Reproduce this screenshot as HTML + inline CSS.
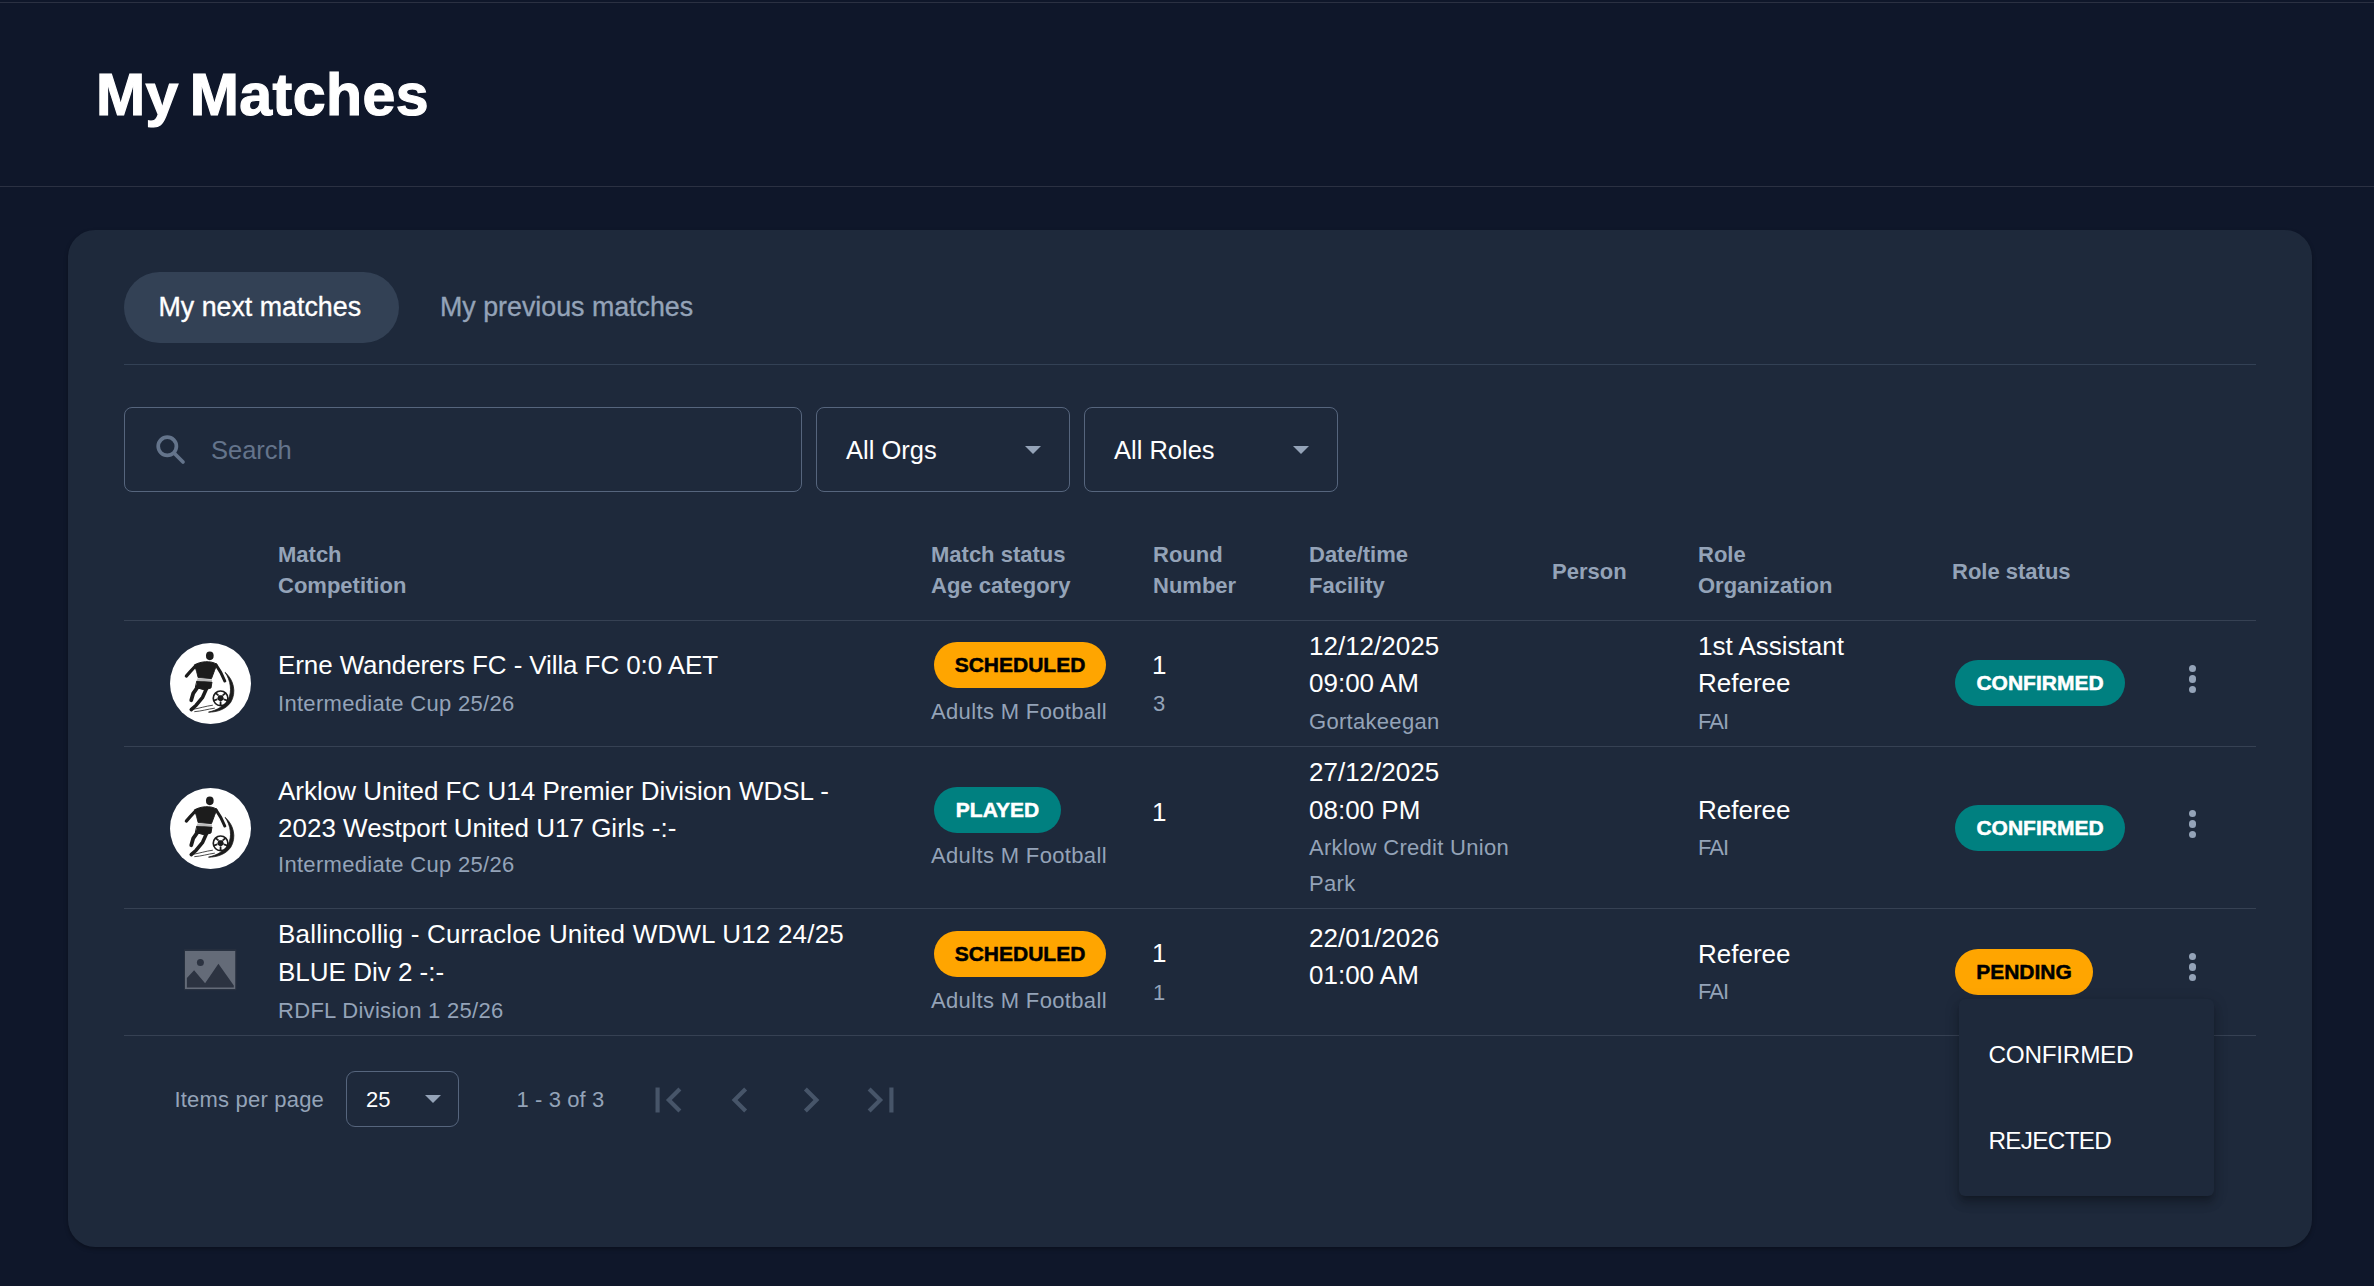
<!DOCTYPE html>
<html><head><meta charset="utf-8"><title>My Matches</title>
<style>
html,body{margin:0;padding:0}
body{width:2374px;height:1286px;overflow:hidden;background:#0f172a;position:relative;font-family:"Liberation Sans",sans-serif}
.t{position:absolute;white-space:nowrap}
.b{position:absolute}
.badge{position:absolute;height:46px;border-radius:23px;font-weight:700;font-size:21px;-webkit-text-stroke:0.5px currentColor;line-height:46px;text-align:center;font-family:"Liberation Sans",sans-serif}
</style></head><body>
<div class="b" style="left:0px;top:2px;width:2374px;height:1px;background:#2b3142"></div>
<div class="b" style="left:0px;top:186px;width:2374px;height:1px;background:#2b3142"></div>
<div class="t" style="left:96px;top:65.54px;font-size:59px;line-height:59px;color:#ffffff;font-weight:700;letter-spacing:0.45px;-webkit-text-stroke:1.2px #fff;word-spacing:-6px;">My Matches</div>
<div class="b" style="left:68px;top:230px;width:2244px;height:1017px;background:#1e293b;border-radius:27px;box-shadow:0 2px 4px rgba(0,0,0,.3)"></div>
<div class="b" style="left:124px;top:272px;width:275px;height:71px;background:#334155;border-radius:36px"></div>
<div class="t" style="left:158.5px;top:294.31px;font-size:26.8px;line-height:26.8px;color:#ffffff;-webkit-text-stroke:0.35px #fff;">My next matches</div>
<div class="t" style="left:440px;top:294.31px;font-size:26.8px;line-height:26.8px;color:#94a3b8;-webkit-text-stroke:0.35px #94a3b8;">My previous matches</div>
<div class="b" style="left:124px;top:364px;width:2132px;height:1px;background:#334155"></div>
<div class="b" style="left:124px;top:407px;width:678px;height:85px;box-sizing:border-box;border:1.5px solid #56657d;border-radius:8px"></div>
<svg class="b" style="left:150px;top:428px" width="44" height="44" viewBox="0 0 44 44"><circle cx="17.3" cy="18.3" r="9.1" fill="none" stroke="#64748b" stroke-width="3.7"/><line x1="24.5" y1="25.5" x2="33" y2="34" stroke="#64748b" stroke-width="3.7" stroke-linecap="round"/></svg>
<div class="t" style="left:211px;top:438.41px;font-size:25.5px;line-height:25.5px;color:#64748b;">Search</div>
<div class="b" style="left:816px;top:407px;width:254px;height:85px;box-sizing:border-box;border:1.5px solid #56657d;border-radius:8px"></div>
<div class="t" style="left:846px;top:437.71px;font-size:25.5px;line-height:25.5px;color:#ffffff;">All Orgs</div>
<svg class="b" style="left:1025px;top:446px" width="16" height="8" viewBox="0 0 16 8"><path d="M0 0H16L8 8Z" fill="#94a3b8"/></svg>
<div class="b" style="left:1084px;top:407px;width:254px;height:85px;box-sizing:border-box;border:1.5px solid #56657d;border-radius:8px"></div>
<div class="t" style="left:1114px;top:437.71px;font-size:25.5px;line-height:25.5px;color:#ffffff;">All Roles</div>
<svg class="b" style="left:1293px;top:446px" width="16" height="8" viewBox="0 0 16 8"><path d="M0 0H16L8 8Z" fill="#94a3b8"/></svg>
<div class="t" style="left:278px;top:543.57px;font-size:22px;line-height:22px;color:#94a3b8;font-weight:700;">Match</div>
<div class="t" style="left:278px;top:575.17px;font-size:22px;line-height:22px;color:#94a3b8;font-weight:700;">Competition</div>
<div class="t" style="left:931px;top:543.57px;font-size:22px;line-height:22px;color:#94a3b8;font-weight:700;">Match status</div>
<div class="t" style="left:931px;top:575.17px;font-size:22px;line-height:22px;color:#94a3b8;font-weight:700;">Age category</div>
<div class="t" style="left:1153px;top:543.57px;font-size:22px;line-height:22px;color:#94a3b8;font-weight:700;">Round</div>
<div class="t" style="left:1153px;top:575.17px;font-size:22px;line-height:22px;color:#94a3b8;font-weight:700;">Number</div>
<div class="t" style="left:1309px;top:543.57px;font-size:22px;line-height:22px;color:#94a3b8;font-weight:700;">Date/time</div>
<div class="t" style="left:1309px;top:575.17px;font-size:22px;line-height:22px;color:#94a3b8;font-weight:700;">Facility</div>
<div class="t" style="left:1552px;top:560.57px;font-size:22px;line-height:22px;color:#94a3b8;font-weight:700;">Person</div>
<div class="t" style="left:1698px;top:543.57px;font-size:22px;line-height:22px;color:#94a3b8;font-weight:700;">Role</div>
<div class="t" style="left:1698px;top:575.17px;font-size:22px;line-height:22px;color:#94a3b8;font-weight:700;">Organization</div>
<div class="t" style="left:1952px;top:560.57px;font-size:22px;line-height:22px;color:#94a3b8;font-weight:700;">Role status</div>
<div class="b" style="left:124px;top:620px;width:2132px;height:1px;background:#364153"></div>
<div class="b" style="left:124px;top:746px;width:2132px;height:1px;background:#364153"></div>
<div class="b" style="left:124px;top:908px;width:2132px;height:1px;background:#364153"></div>
<div class="b" style="left:124px;top:1035px;width:2132px;height:1px;background:#364153"></div>
<svg class="b" style="left:170.0px;top:643.0px" width="81" height="81" viewBox="0 0 82 82"><circle cx="41" cy="41" r="41" fill="#fff"/>
<g fill="#1c1c1c" stroke="#1c1c1c" stroke-linecap="round" stroke-linejoin="round">
<ellipse cx="40.3" cy="13" rx="3.9" ry="4.4" stroke="none"/>
<path d="M25 22 C31 18.5 41 17.5 47.5 21.5 L45 28 L42 36 L28.5 35 L27 29 Z" stroke-width="1"/>
<path d="M26 23 L20.5 29 L16.5 33.5" fill="none" stroke-width="3.2"/>
<path d="M46.5 22 L51.5 30 L55.5 38.5" fill="none" stroke-width="3"/>
<path d="M27.5 38.5 L42.5 39.5 L41.5 45.5 L35 47.5 L26 45 Z" stroke-width="1"/>
<path d="M28.5 44 L23.5 51 L21.5 58" fill="none" stroke-width="3.8"/>
<path d="M37 46 L33 55 L26.5 63 L21.5 67.5" fill="none" stroke-width="3.6"/>
<path d="M56 30 C64.5 37 67.5 50 61.5 60 C56.5 67 48 70 39 70 C47.5 68 55 64 59 57 C63 49 61.5 38 56 30 Z" stroke-width="0.8"/>
<path d="M24 67 C30 66 36 64 43 63" fill="none" stroke-width="0.8"/>
<path d="M25 69.5 C32 69 38 67 45 66" fill="none" stroke-width="0.8"/>
</g>
<path d="M27.5 36 L42.5 37 L42.5 39 L27.5 38.5 Z" fill="#bbb"/>
<circle cx="51.2" cy="56" r="7.4" fill="#fff" stroke="#1c1c1c" stroke-width="1.7"/>
<path d="M49 53 L53.4 53 L54.7 57 L51.2 59.6 L47.7 57 Z" fill="#1c1c1c"/>
<path d="M46 50.5 L49 53 M56.4 50.5 L53.4 53 M54.7 57 L58.4 58.5 M47.7 57 L44 58.5 M51.2 59.6 L51.2 63" stroke="#1c1c1c" stroke-width="1.8" fill="none"/>
</svg>
<div class="t" style="left:278px;top:651.99px;font-size:26px;line-height:26px;color:#ffffff;letter-spacing:-0.1px;">Erne Wanderers FC - Villa FC 0:0 AET</div>
<div class="t" style="left:278px;top:692.67px;font-size:22px;line-height:22px;color:#94a3b8;letter-spacing:0.3px;">Intermediate Cup 25/26</div>
<div class="badge" style="left:934px;top:642px;width:172px;background:#ffa500;color:#000">SCHEDULED</div>
<div class="t" style="left:931px;top:701.17px;font-size:22px;line-height:22px;color:#94a3b8;letter-spacing:0.35px;">Adults M Football</div>
<div class="t" style="left:1152px;top:652.09px;font-size:26px;line-height:26px;color:#ffffff;">1</div>
<div class="t" style="left:1153px;top:693.07px;font-size:22px;line-height:22px;color:#94a3b8;">3</div>
<div class="t" style="left:1309px;top:632.99px;font-size:26px;line-height:26px;color:#ffffff;">12/12/2025</div>
<div class="t" style="left:1309px;top:669.69px;font-size:26px;line-height:26px;color:#ffffff;">09:00 AM</div>
<div class="t" style="left:1309px;top:710.87px;font-size:22px;line-height:22px;color:#94a3b8;letter-spacing:0.3px;">Gortakeegan</div>
<div class="t" style="left:1698px;top:632.99px;font-size:26px;line-height:26px;color:#ffffff;">1st Assistant</div>
<div class="t" style="left:1698px;top:669.69px;font-size:26px;line-height:26px;color:#ffffff;">Referee</div>
<div class="t" style="left:1698px;top:710.87px;font-size:22px;line-height:22px;color:#94a3b8;letter-spacing:-0.9px;">FAI</div>
<div class="badge" style="left:1955px;top:660px;width:170px;background:#008080;color:#fff">CONFIRMED</div>
<div class="b" style="left:2188.5px;top:664.7px;width:7.6px;height:7.6px;background:#94a3b8;border-radius:50%"></div>
<div class="b" style="left:2188.5px;top:675.2px;width:7.6px;height:7.6px;background:#94a3b8;border-radius:50%"></div>
<div class="b" style="left:2188.5px;top:685.7px;width:7.6px;height:7.6px;background:#94a3b8;border-radius:50%"></div>
<svg class="b" style="left:170.0px;top:787.5px" width="81" height="81" viewBox="0 0 82 82"><circle cx="41" cy="41" r="41" fill="#fff"/>
<g fill="#1c1c1c" stroke="#1c1c1c" stroke-linecap="round" stroke-linejoin="round">
<ellipse cx="40.3" cy="13" rx="3.9" ry="4.4" stroke="none"/>
<path d="M25 22 C31 18.5 41 17.5 47.5 21.5 L45 28 L42 36 L28.5 35 L27 29 Z" stroke-width="1"/>
<path d="M26 23 L20.5 29 L16.5 33.5" fill="none" stroke-width="3.2"/>
<path d="M46.5 22 L51.5 30 L55.5 38.5" fill="none" stroke-width="3"/>
<path d="M27.5 38.5 L42.5 39.5 L41.5 45.5 L35 47.5 L26 45 Z" stroke-width="1"/>
<path d="M28.5 44 L23.5 51 L21.5 58" fill="none" stroke-width="3.8"/>
<path d="M37 46 L33 55 L26.5 63 L21.5 67.5" fill="none" stroke-width="3.6"/>
<path d="M56 30 C64.5 37 67.5 50 61.5 60 C56.5 67 48 70 39 70 C47.5 68 55 64 59 57 C63 49 61.5 38 56 30 Z" stroke-width="0.8"/>
<path d="M24 67 C30 66 36 64 43 63" fill="none" stroke-width="0.8"/>
<path d="M25 69.5 C32 69 38 67 45 66" fill="none" stroke-width="0.8"/>
</g>
<path d="M27.5 36 L42.5 37 L42.5 39 L27.5 38.5 Z" fill="#bbb"/>
<circle cx="51.2" cy="56" r="7.4" fill="#fff" stroke="#1c1c1c" stroke-width="1.7"/>
<path d="M49 53 L53.4 53 L54.7 57 L51.2 59.6 L47.7 57 Z" fill="#1c1c1c"/>
<path d="M46 50.5 L49 53 M56.4 50.5 L53.4 53 M54.7 57 L58.4 58.5 M47.7 57 L44 58.5 M51.2 59.6 L51.2 63" stroke="#1c1c1c" stroke-width="1.8" fill="none"/>
</svg>
<div class="t" style="left:278px;top:778.09px;font-size:26px;line-height:26px;color:#ffffff;">Arklow United FC U14 Premier Division WDSL -</div>
<div class="t" style="left:278px;top:814.99px;font-size:26px;line-height:26px;color:#ffffff;">2023 Westport United U17 Girls -:-</div>
<div class="t" style="left:278px;top:854.47px;font-size:22px;line-height:22px;color:#94a3b8;letter-spacing:0.3px;">Intermediate Cup 25/26</div>
<div class="badge" style="left:934px;top:787px;width:127px;background:#008080;color:#fff">PLAYED</div>
<div class="t" style="left:931px;top:845.27px;font-size:22px;line-height:22px;color:#94a3b8;letter-spacing:0.35px;">Adults M Football</div>
<div class="t" style="left:1152px;top:798.89px;font-size:26px;line-height:26px;color:#ffffff;">1</div>
<div class="t" style="left:1309px;top:759.39px;font-size:26px;line-height:26px;color:#ffffff;">27/12/2025</div>
<div class="t" style="left:1309px;top:796.79px;font-size:26px;line-height:26px;color:#ffffff;">08:00 PM</div>
<div class="t" style="left:1309px;top:836.57px;font-size:22px;line-height:22px;color:#94a3b8;letter-spacing:0.3px;">Arklow Credit Union</div>
<div class="t" style="left:1309px;top:873.47px;font-size:22px;line-height:22px;color:#94a3b8;letter-spacing:0.3px;">Park</div>
<div class="t" style="left:1698px;top:796.79px;font-size:26px;line-height:26px;color:#ffffff;">Referee</div>
<div class="t" style="left:1698px;top:836.57px;font-size:22px;line-height:22px;color:#94a3b8;letter-spacing:-0.9px;">FAI</div>
<div class="badge" style="left:1955px;top:805px;width:170px;background:#008080;color:#fff">CONFIRMED</div>
<div class="b" style="left:2188.5px;top:809.7px;width:7.6px;height:7.6px;background:#94a3b8;border-radius:50%"></div>
<div class="b" style="left:2188.5px;top:820.2px;width:7.6px;height:7.6px;background:#94a3b8;border-radius:50%"></div>
<div class="b" style="left:2188.5px;top:830.7px;width:7.6px;height:7.6px;background:#94a3b8;border-radius:50%"></div>
<svg class="b" style="left:183px;top:949px" width="54" height="42" viewBox="0 0 54 42"><rect x="1.1" y="0.3" width="52.3" height="41" fill="#283140"/><rect x="2" y="2" width="50.2" height="38" fill="#646b78"/>
<circle cx="17.4" cy="13.4" r="3.5" fill="#2c3341"/>
<path d="M3.9 38.6 L3.9 29 L11.1 21.3 L22.1 34.2 L35.4 14.8 L50.8 36.5 L50.8 38.6 Z" fill="#2c3341"/></svg>
<div class="t" style="left:278px;top:921.29px;font-size:26px;line-height:26px;color:#ffffff;letter-spacing:0.2px;">Ballincollig - Curracloe United WDWL U12 24/25</div>
<div class="t" style="left:278px;top:958.79px;font-size:26px;line-height:26px;color:#ffffff;">BLUE Div 2 -:-</div>
<div class="t" style="left:278px;top:999.67px;font-size:22px;line-height:22px;color:#94a3b8;letter-spacing:0.3px;">RDFL Division 1 25/26</div>
<div class="badge" style="left:934px;top:931px;width:172px;background:#ffa500;color:#000">SCHEDULED</div>
<div class="t" style="left:931px;top:989.97px;font-size:22px;line-height:22px;color:#94a3b8;letter-spacing:0.35px;">Adults M Football</div>
<div class="t" style="left:1152px;top:940.19px;font-size:26px;line-height:26px;color:#ffffff;">1</div>
<div class="t" style="left:1153px;top:981.67px;font-size:22px;line-height:22px;color:#94a3b8;">1</div>
<div class="t" style="left:1309px;top:924.59px;font-size:26px;line-height:26px;color:#ffffff;">22/01/2026</div>
<div class="t" style="left:1309px;top:961.89px;font-size:26px;line-height:26px;color:#ffffff;">01:00 AM</div>
<div class="t" style="left:1698px;top:941.49px;font-size:26px;line-height:26px;color:#ffffff;">Referee</div>
<div class="t" style="left:1698px;top:981.47px;font-size:22px;line-height:22px;color:#94a3b8;letter-spacing:-0.9px;">FAI</div>
<div class="badge" style="left:1955px;top:949px;width:138px;background:#ffa500;color:#000">PENDING</div>
<div class="b" style="left:2188.5px;top:952.7px;width:7.6px;height:7.6px;background:#94a3b8;border-radius:50%"></div>
<div class="b" style="left:2188.5px;top:963.2px;width:7.6px;height:7.6px;background:#94a3b8;border-radius:50%"></div>
<div class="b" style="left:2188.5px;top:973.7px;width:7.6px;height:7.6px;background:#94a3b8;border-radius:50%"></div>
<div class="t" style="left:174.5px;top:1088.97px;font-size:22px;line-height:22px;color:#94a3b8;letter-spacing:0.2px;">Items per page</div>
<div class="b" style="left:346px;top:1071px;width:113px;height:56px;box-sizing:border-box;border:1.5px solid #56657d;border-radius:9px"></div>
<div class="t" style="left:366px;top:1088.97px;font-size:22px;line-height:22px;color:#ffffff;">25</div>
<svg class="b" style="left:425px;top:1095px" width="16" height="8" viewBox="0 0 16 8"><path d="M0 0H16L8 8Z" fill="#94a3b8"/></svg>
<div class="t" style="left:516.5px;top:1088.97px;font-size:22px;line-height:22px;color:#94a3b8;letter-spacing:0.1px;">1 - 3 of 3</div>
<svg class="b" style="left:643.4px;top:1074.6px" width="50" height="50" viewBox="0 0 24 24"><path d="M18.41 16.59L13.82 12l4.59-4.59L17 6l-6 6 6 6zM6 6h2v12H6z" fill="#475569"/></svg>
<svg class="b" style="left:715.1px;top:1074.6px" width="50" height="50" viewBox="0 0 24 24"><path d="M15.41 7.41L14 6l-6 6 6 6 1.41-1.41L10.83 12z" fill="#475569"/></svg>
<svg class="b" style="left:785.9px;top:1074.6px" width="50" height="50" viewBox="0 0 24 24"><path d="M10 6L8.59 7.41 13.17 12l-4.58 4.59L10 18l6-6z" fill="#475569"/></svg>
<svg class="b" style="left:855.5px;top:1074.6px" width="50" height="50" viewBox="0 0 24 24"><path d="M5.59 7.41L10.18 12l-4.59 4.59L7 18l6-6-6-6zM16 6h2v12h-2z" fill="#475569"/></svg>
<div class="b" style="left:1959px;top:999px;width:255px;height:197px;background:#1e293b;border-radius:6px;box-shadow:0 5px 5px -3px rgba(0,0,0,.2),0 8px 10px 1px rgba(0,0,0,.14),0 3px 14px 2px rgba(0,0,0,.12)"></div>
<div class="t" style="left:1988.5px;top:1043.13px;font-size:24.3px;line-height:24.3px;color:#ffffff;letter-spacing:-0.25px;">CONFIRMED</div>
<div class="t" style="left:1988.5px;top:1128.63px;font-size:24.3px;line-height:24.3px;color:#ffffff;letter-spacing:-0.7px;">REJECTED</div>
</body></html>
